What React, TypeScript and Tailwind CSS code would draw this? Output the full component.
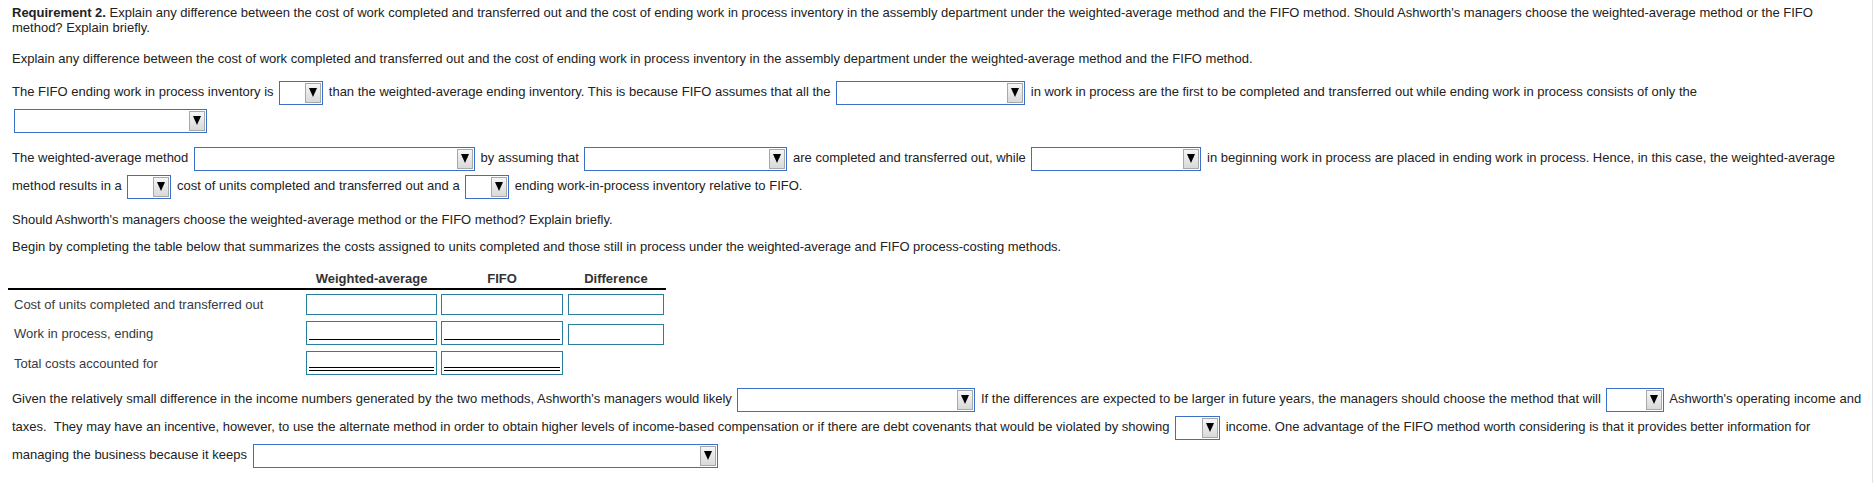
import type { ReactNode } from "react"

function Drop({ w }: { w: string }) {
  return (
    <span className={`mx-[2px] inline-flex h-[24px] items-center justify-end border border-[#3b6fc9] bg-white pr-[1px] align-middle ${w}`}>
      <span className="flex h-[20px] w-[16px] items-center justify-center border border-[#a8a8a8] bg-linear-to-b from-[#f6f6f6] to-[#d9d9d9]">
        <svg width="8" height="9" viewBox="0 0 8 9">
          <polygon points="0,0 8,0 4,9" fill="#000" />
        </svg>
      </span>
    </span>
  )
}

function Row({ label, children }: { label: string; children: ReactNode }) {
  return (
    <div className="mt-[6px] flex items-center first:mt-[4px]">
      <div className="w-[298px] pl-[6px] text-[13px] leading-[15px] text-[#3a3a3a]">{label}</div>
      {children}
    </div>
  )
}

export default function App() {
  return (
    <div className="min-h-[483px] w-[1873px] border-r border-[#e2e2e2] bg-white pl-[12px] pt-[5px] font-['Liberation_Sans',Arial,sans-serif] text-[13px] text-[#222]">
      <div className="w-[1856px]">
        {/* Requirement */}
        <p className="leading-[15px]">
          <b>Requirement 2.</b> Explain any difference between the cost of work completed and transferred out and the cost of ending work in process inventory in the assembly department under the weighted-average method and the FIFO method. Should Ashworth's managers choose the weighted-average method or the FIFO
          <br />
          method? Explain briefly.
        </p>

        <p className="mt-[16px] leading-[15px]">
          Explain any difference between the cost of work completed and transferred out and the cost of ending work in process inventory in the assembly department under the weighted-average method and the FIFO method.
        </p>

        <p className="mt-[12px] leading-[28px]">
          The FIFO ending work in process inventory is <Drop w="w-[44px]" /> than the weighted-average ending inventory. This is because FIFO assumes that all the <Drop w="w-[189px]" /> in work in process are the first to be completed and transferred out while ending work in process consists of only the
          <br />
          <Drop w="w-[193px]" />
        </p>

        <p className="mt-[10px] leading-[28px]">
          The weighted-average method <Drop w="w-[281px]" /> by assuming that <Drop w="w-[203px]" /> are completed and transferred out, while <Drop w="w-[170px]" /> in beginning work in process are placed in ending work in process. Hence, in this case, the weighted-average
          <br />
          method results in a <Drop w="w-[44px]" /> cost of units completed and transferred out and a <Drop w="w-[44px]" /> ending work-in-process inventory relative to FIFO.
        </p>

        <p className="mt-[12px] leading-[15px]">
          Should Ashworth's managers choose the weighted-average method or the FIFO method? Explain briefly.
        </p>

        <p className="mt-[12px] leading-[15px]">
          Begin by completing the table below that summarizes the costs assigned to units completed and those still in process under the weighted-average and FIFO process-costing methods.
        </p>

        {/* Summary table */}
        <div className="-ml-1 mt-[14px] w-[658px]">
          <div className="flex border-b-2 border-black pb-[2px] pt-[3px] text-[13px] font-bold leading-[15px] text-[#333]">
            <div className="w-[298px]" />
            <div className="w-[131px] text-center">Weighted-average</div>
            <div className="ml-[4px] w-[122px] text-center">FIFO</div>
            <div className="ml-[5px] w-[96px] text-center">Difference</div>
          </div>

          <div>
            <Row label="Cost of units completed and transferred out">
              <div className="h-[21px] w-[131px] border border-[#2a7f9e] bg-white" />
              <div className="ml-[4px] h-[21px] w-[122px] border border-[#2a7f9e] bg-white" />
              <div className="ml-[5px] h-[21px] w-[96px] border border-[#2a7f9e] bg-white" />
            </Row>
            <Row label="Work in process, ending">
              <div className="flex h-[24px] w-[131px] flex-col justify-end border border-[#2a7f9e] bg-white px-[2px] pb-[4px]">
                <div className="border-b border-black" />
              </div>
              <div className="ml-[4px] flex h-[24px] w-[122px] flex-col justify-end border border-[#2a7f9e] bg-white px-[2px] pb-[4px]">
                <div className="border-b border-black" />
              </div>
              <div className="ml-[5px] h-[21px] w-[96px] self-end border border-[#2a7f9e] bg-white" />
            </Row>
            <Row label="Total costs accounted for">
              <div className="flex h-[24px] w-[131px] flex-col justify-end border border-[#2a7f9e] bg-white px-[2px] pb-[3px]">
                <div className="border-b-4 border-double border-black" />
              </div>
              <div className="ml-[4px] flex h-[24px] w-[122px] flex-col justify-end border border-[#2a7f9e] bg-white px-[2px] pb-[3px]">
                <div className="border-b-4 border-double border-black" />
              </div>
            </Row>
          </div>
        </div>

        <p className="mt-[10px] leading-[28px]">
          Given the relatively small difference in the income numbers generated by the two methods, Ashworth's managers would likely <Drop w="w-[238px]" /> If the differences are expected to be larger in future years, the managers should choose the method that will <Drop w="w-[58px]" /> Ashworth's operating income and
          <br />
          taxes.{"\u00a0"} They may have an incentive, however, to use the alternate method in order to obtain higher levels of income-based compensation or if there are debt covenants that would be violated by showing <Drop w="w-[45px]" /> income. One advantage of the FIFO method worth considering is that it provides better information for
          <br />
          managing the business because it keeps <Drop w="w-[465px]" />
        </p>
      </div>
    </div>
  )
}
